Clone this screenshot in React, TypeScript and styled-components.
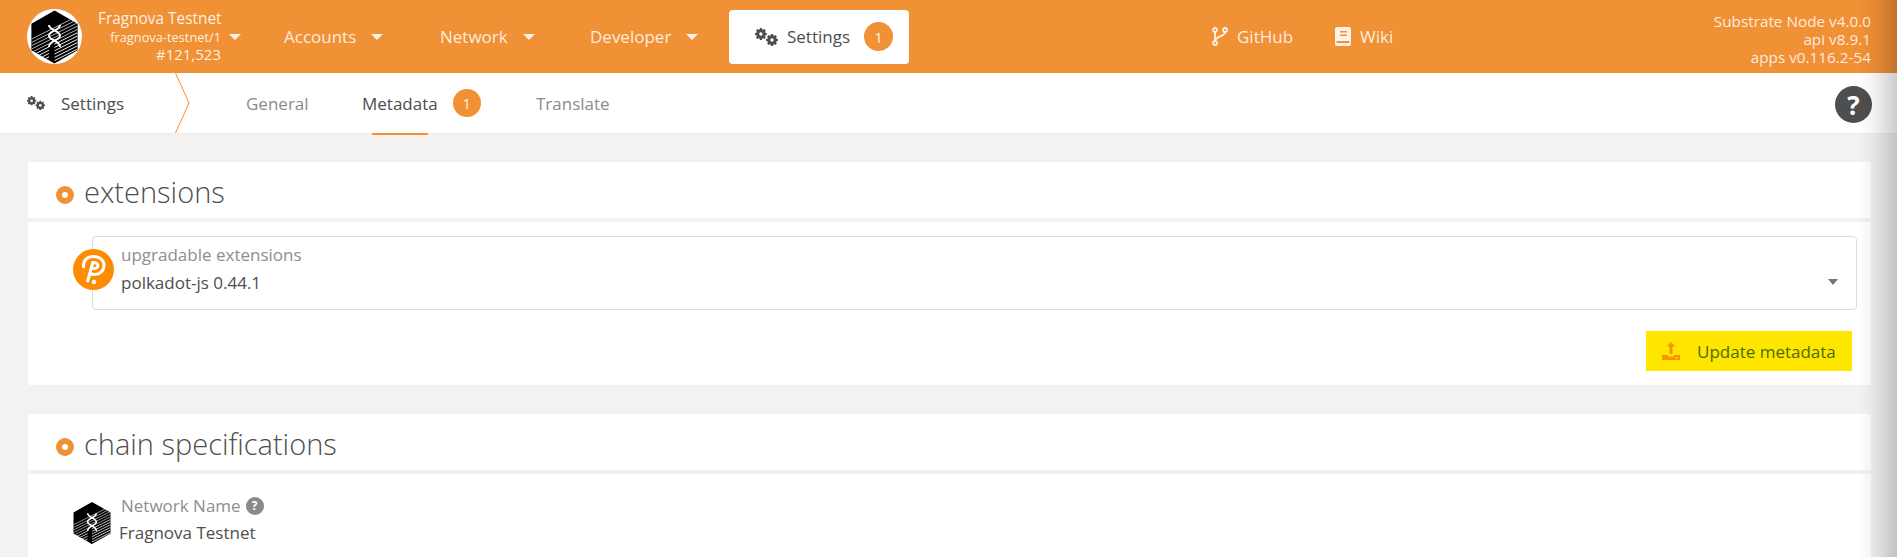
import React from 'react';
import styled, { createGlobalStyle } from 'styled-components';

const Global = createGlobalStyle`
  html, body { margin: 0; padding: 0; background: #f3f2f0; overflow: hidden; }
  body { font-family: "Open Sans", "Liberation Sans", sans-serif; color: #4e4e4e; }
  * { box-sizing: border-box; }
`;

const Page = styled.div`
  width: 1897px;
  height: 557px;
  overflow: hidden;
  position: relative;
`;

const TopBar = styled.header`
  height: 73px;
  background: #f19135;
  display: flex;
  align-items: center;
  color: rgba(255, 255, 255, 0.85);
  padding: 0 5px 0 27px;
`;

const Logo = styled.div`
  width: 55px;
  height: 55px;
  border-radius: 50%;
  background: #fff;
  display: flex;
  align-items: center;
  justify-content: center;
  flex: none;
`;

const ChainBlock = styled.div`
  margin-left: 16px;
  width: 123px;
  text-align: right;
  font-size: 12.8px;
  line-height: 18px;
  flex: none;
  color: rgba(255, 255, 255, 0.88);
`;

const ChainName = styled.div`
  font-size: 15.4px;
  line-height: 18px;
  white-space: nowrap;
`;

const ChainBest = styled.div`
  font-size: 15px;
  line-height: 17px;
`;

const Caret = styled.span<{ $color?: string }>`
  display: inline-block;
  width: 0;
  height: 0;
  border-left: 6px solid transparent;
  border-right: 6px solid transparent;
  border-top: 6px solid ${p => p.$color || 'rgba(255,255,255,0.88)'};
  flex: none;
`;

const ChainCaret = styled(Caret)`
  margin: 0 0 0 8px;
`;

const MainNav = styled.nav`
  display: flex;
  align-items: center;
  margin-left: 43px;
`;

const NavItem = styled.div<{ $w: number }>`
  display: flex;
  align-items: center;
  gap: 15px;
  width: ${p => p.$w}px;
  font-size: 17px;
  white-space: nowrap;
`;

const ActiveNav = styled.div`
  width: 180px;
  height: 54px;
  background: #fff;
  border-radius: 4px;
  color: #4e4e4e;
  display: flex;
  align-items: center;
  padding-left: 26px;
  font-size: 17px;
`;

const NavIcon = styled.span`
  display: inline-flex;
  margin-right: 9px;
`;

const Badge = styled.span`
  width: 29px;
  height: 29px;
  border-radius: 50%;
  background: #f19135;
  color: rgba(255, 255, 255, 0.9);
  font-size: 15px;
  display: flex;
  align-items: center;
  justify-content: center;
  flex: none;
`;

const ActiveBadge = styled(Badge)`
  margin-left: 14px;
`;

const LinkGroup = styled.div`
  display: flex;
  align-items: center;
  margin-left: 303px;
  gap: 42px;
`;

const ExtLink = styled.div`
  display: flex;
  align-items: center;
  gap: 9px;
  font-size: 17px;
`;

const Versions = styled.div`
  margin-left: auto;
  margin-right: 21px;
  text-align: right;
  font-size: 15.3px;
  line-height: 18px;
  padding-top: 4px;
  color: rgba(255, 255, 255, 0.85);
`;

const SubBar = styled.div`
  height: 61px;
  background: #fff;
  display: flex;
  align-items: flex-start;
  padding-left: 27px;
  position: relative;
  border-bottom: 1px solid #eeedec;
`;

const SubTitle = styled.div`
  width: 148px;
  height: 60px;
  display: flex;
  align-items: center;
  font-size: 17px;
  flex: none;
`;

const SubIcon = styled.span`
  display: inline-flex;
  margin-right: 16px;
`;

const Chevron = styled.svg`
  width: 16px;
  height: 60px;
  flex: none;
`;

const Tabs = styled.div`
  display: flex;
  align-items: center;
  height: 60px;
  margin-left: 55px;
`;

const Tab = styled.div<{ $active?: boolean; $w: number }>`
  position: relative;
  width: ${p => p.$w}px;
  height: 60px;
  display: flex;
  align-items: center;
  font-size: 17px;
  color: ${p => (p.$active ? '#4e4e4e' : '#8c8b8a')};
  white-space: nowrap;
`;

const TabBadge = styled(Badge)`
  margin-left: 15px;
  width: 28px;
  height: 28px;
`;

const Underline = styled.span`
  position: absolute;
  left: 10px;
  bottom: -2px;
  width: 56px;
  height: 2px;
  background: #f19135;
`;

const Help = styled.div`
  position: absolute;
  left: 1835px;
  top: 13px;
  width: 37px;
  height: 37px;
  border-radius: 50%;
  background: #4e4e4e;
  color: #fff;
  font-weight: 700;
  font-size: 26px;
  display: flex;
  align-items: center;
  justify-content: center;
`;

const Content = styled.main`
  padding: 28px 26px 0 28px;
`;

const SectionHead = styled.div`
  height: 56px;
  background: #fff;
  border-radius: 2px 2px 0 0;
  display: flex;
  align-items: center;
  padding: 3px 0 0 28px;
  margin-bottom: 4px;
`;

const Dot = styled.span`
  width: 18px;
  height: 18px;
  margin-top: 7px;
  border-radius: 50%;
  border: 6px solid #f19135;
  background: #fff;
  margin-right: 10px;
  flex: none;
`;

const SectionTitle = styled.h1`
  margin: 0;
  font-size: 29px;
  font-weight: 300;
  color: #4e4e4e;
  line-height: 36px;
`;

const Card = styled.section`
  background: #fff;
  height: 163px;
  padding: 14px 14px 0 64px;
  margin-bottom: 29px;
  border-radius: 0 0 2px 2px;
`;

const SelectRow = styled.div`
  position: relative;
`;

const DropBox = styled.div`
  height: 74px;
  border: 1px solid #dcdcdc;
  border-radius: 4px;
  padding: 7px 0 0 28px;
  position: relative;
`;

const FieldLabel = styled.div`
  font-size: 17px;
  line-height: 22px;
  color: #8f8e8d;
  white-space: nowrap;
`;

const FieldValue = styled.div`
  font-size: 17px;
  line-height: 22px;
  margin-top: 6px;
  color: #4e4e4e;
  white-space: nowrap;
`;

const SelectCaret = styled(Caret)`
  position: absolute;
  right: 18px;
  top: 42px;
  border-left-width: 5px;
  border-right-width: 5px;
  border-top-width: 6px;
`;

const PolkadotBadge = styled.div`
  position: absolute;
  left: -19px;
  top: 13px;
  width: 41px;
  height: 41px;
  border-radius: 50%;
  background: #ff8c00;
  display: flex;
`;

const ActionRow = styled.div`
  display: flex;
  justify-content: flex-end;
  margin-top: 21px;
`;

const HighlightButton = styled.div`
  width: 206px;
  height: 40px;
  margin-right: 5px;
  background: #ffe600;
  display: flex;
  align-items: center;
  padding-left: 16px;
  font-size: 17px;
  color: #4d6b00;
`;

const ButtonIcon = styled.span`
  display: inline-flex;
  margin-right: 17px;
`;

const SpecCard = styled.section`
  background: #fff;
  height: 200px;
  padding: 21px 0 0 42px;
  display: flex;
  align-items: flex-start;
`;

const SpecLogo = styled.div`
  margin-top: 6px;
  display: flex;
`;

const SpecText = styled.div`
  margin-left: 5px;
`;

const LabelRow = styled.div`
  display: flex;
  align-items: center;
  gap: 5px;
  margin-left: 2px;
  font-size: 17px;
  line-height: 22px;
  color: #8f8e8d;
`;

const Hint = styled.span`
  width: 18px;
  height: 18px;
  border-radius: 50%;
  background: #8a8a8a;
  color: #fff;
  font-size: 12px;
  font-weight: 700;
  display: flex;
  align-items: center;
  justify-content: center;
`;

const SpecValue = styled.div`
  font-size: 17px;
  line-height: 22px;
  margin-top: 5px;
  color: #4e4e4e;
`;

const Gutter = styled.div`
  position: absolute;
  top: 0;
  right: 0;
  bottom: 0;
  width: 38px;
  background: linear-gradient(to right, rgba(0, 0, 0, 0) 0%, rgba(0, 0, 0, 0.05) 40%, rgba(0, 0, 0, 0.2) 100%);
  pointer-events: none;
`;

const HexLogo = ({ size }: { size: number }) => {
  const lines = [];
  for (let i = 0; i < 14; i++) {
    const y = 54 + i * 6;
    lines.push(<line key={i} x1={8} y1={y} x2={92} y2={y - 42} stroke="#fff" strokeWidth={1.8} opacity={i < 5 ? 0.7 : 0.95} />);
  }
  const id = `hex${size}`;
  return (
    <svg width={size} height={size} viewBox="0 0 100 100">
      <clipPath id={id}>
        <polygon points="50,2 92,26 92,74 50,98 8,74 8,26" />
      </clipPath>
      <polygon points="50,2 92,26 92,74 50,98 8,74 8,26" fill="#000" />
      <g clipPath={`url(#${id})`}>
        {lines}
        <path d="M50 62 L50 98 L40 92 L40 58 Z" fill="#000" />
      </g>
      <path d="M40 28 C40 38 60 38 60 48 C60 56 40 56 40 68 M60 28 C60 38 40 38 40 48 C40 56 60 56 60 68" stroke="#fff" strokeWidth={3.6} fill="none" />
    </svg>
  );
};

const gearPath = (cx: number, cy: number, r: number) => {
  const teeth = 8;
  const outer = r;
  const inner = r * 0.78;
  let d = '';
  for (let i = 0; i < teeth; i++) {
    const a = (i / teeth) * Math.PI * 2;
    const w = Math.PI / teeth;
    const pts = [
      [inner, a - w * 0.75],
      [outer, a - w * 0.42],
      [outer, a + w * 0.42],
      [inner, a + w * 0.75],
    ];
    pts.forEach(([rad, ang], j) => {
      const x = (cx + rad * Math.cos(ang)).toFixed(2);
      const y = (cy + rad * Math.sin(ang)).toFixed(2);
      d += `${i === 0 && j === 0 ? 'M' : 'L'}${x} ${y} `;
    });
  }
  d += 'Z ';
  const h = r * 0.28;
  d += `M${cx - h} ${cy} a${h} ${h} 0 1 0 ${h * 2} 0 a${h} ${h} 0 1 0 ${-h * 2} 0 Z`;
  return d;
};

const Gears = ({ color, width = 23 }: { color: string; width?: number }) => (
  <svg width={width} height={(width * 18) / 23} viewBox="0 0 23 18" fill={color}>
    <path fillRule="evenodd" d={gearPath(5.9, 6, 6)} />
    <path fillRule="evenodd" d={gearPath(17, 12, 6)} />
  </svg>
);

const CodeBranch = () => (
  <svg width="16" height="19" viewBox="0 0 16 19" fill="none" stroke="rgba(255,255,255,0.88)" strokeWidth="1.8">
    <circle cx="3" cy="3" r="2" />
    <circle cx="3" cy="16" r="2" />
    <circle cx="13" cy="3" r="2" />
    <path d="M3 5v9M13 5c0 5-9 3-10 9" />
  </svg>
);

const Book = () => (
  <svg width="16" height="19" viewBox="0 0 16 19">
    <path fill="rgba(255,255,255,0.88)" d="M2 0h12a2 2 0 0 1 2 2v15a2 2 0 0 1-2 2H2a2 2 0 0 1-2-2V2a2 2 0 0 1 2-2z" />
    <rect x="5" y="4" width="7" height="1.500" fill="#f19135" />
    <rect x="5" y="7.500" width="7" height="1.500" fill="#f19135" />
    <rect x="1.500" y="14" width="13" height="2" fill="#f19135" />
  </svg>
);

const Polkadot = () => (
  <svg width="41" height="41" viewBox="0 0 41 41" fill="none">
    <path d="M10.500 18C10 11 14.500 7.500 20.500 7.500 27 7.500 31 11.500 31 16.500 31 21.500 27 25.500 22 25.500 20.500 25.500 19.500 25.300 18 25" stroke="#fff" strokeWidth="3" strokeLinecap="round" />
    <path d="M20.500 13.500C22.500 13.500 25 14.500 25 16.500 25 18 23.500 19.500 21 19.500M19.800 13.500L14.700 32" stroke="#fff" strokeWidth="3" strokeLinecap="round" />
    <circle cx="21" cy="33" r="2.300" fill="#fff" />
  </svg>
);

const Upload = () => (
  <svg width="18" height="18" viewBox="0 0 18 18" fill="#f79400">
    <path d="M9 0l4.500 4.500h-3V12h-3V4.500h-3z" />
    <path d="M0 13h6v1.500h6V13h6v5H0z" />
    <rect x="13.500" y="15" width="2" height="1.500" fill="#ffe600" />
  </svg>
);

export default function App() {
  return (
    <Page>
      <Global />
      <TopBar>
        <Logo>
          <HexLogo size={56} />
        </Logo>
        <ChainBlock>
          <ChainName>Fragnova Testnet</ChainName>
          <div>fragnova-testnet/1</div>
          <ChainBest>#121,523</ChainBest>
        </ChainBlock>
        <ChainCaret />
        <MainNav>
          <NavItem $w={156}>Accounts <Caret /></NavItem>
          <NavItem $w={150}>Network <Caret /></NavItem>
          <NavItem $w={139}>Developer <Caret /></NavItem>
          <ActiveNav>
            <NavIcon><Gears color="#4e4e4e" /></NavIcon>
            Settings
            <ActiveBadge>1</ActiveBadge>
          </ActiveNav>
        </MainNav>
        <LinkGroup>
          <ExtLink><CodeBranch />GitHub</ExtLink>
          <ExtLink><Book />Wiki</ExtLink>
        </LinkGroup>
        <Versions>
          <div>Substrate Node v4.0.0</div>
          <div>api v8.9.1</div>
          <div>apps v0.116.2-54</div>
        </Versions>
      </TopBar>
      <SubBar>
        <SubTitle>
          <SubIcon><Gears color="#4e4e4e" width={18} /></SubIcon>
          Settings
        </SubTitle>
        <Chevron viewBox="0 0 16 60">
          <path d="M0.500 0 L14 30 L0.500 60" fill="none" stroke="#f19135" strokeWidth="1" />
        </Chevron>
        <Tabs>
          <Tab $w={116}>General</Tab>
          <Tab $active $w={174}>
            Metadata
            <TabBadge>1</TabBadge>
            <Underline />
          </Tab>
          <Tab $w={90}>Translate</Tab>
        </Tabs>
        <Help>?</Help>
      </SubBar>
      <Content>
        <SectionHead>
          <Dot />
          <SectionTitle>extensions</SectionTitle>
        </SectionHead>
        <Card>
          <SelectRow>
            <DropBox>
              <FieldLabel>upgradable extensions</FieldLabel>
              <FieldValue>polkadot-js 0.44.1</FieldValue>
              <SelectCaret $color="#757575" />
            </DropBox>
            <PolkadotBadge><Polkadot /></PolkadotBadge>
          </SelectRow>
          <ActionRow>
            <HighlightButton>
              <ButtonIcon><Upload /></ButtonIcon>
              Update metadata
            </HighlightButton>
          </ActionRow>
        </Card>
        <SectionHead>
          <Dot />
          <SectionTitle>chain specifications</SectionTitle>
        </SectionHead>
        <SpecCard>
          <SpecLogo><HexLogo size={44} /></SpecLogo>
          <SpecText>
            <LabelRow>Network Name <Hint>?</Hint></LabelRow>
            <SpecValue>Fragnova Testnet</SpecValue>
          </SpecText>
        </SpecCard>
      </Content>
      <Gutter />
    </Page>
  );
}
